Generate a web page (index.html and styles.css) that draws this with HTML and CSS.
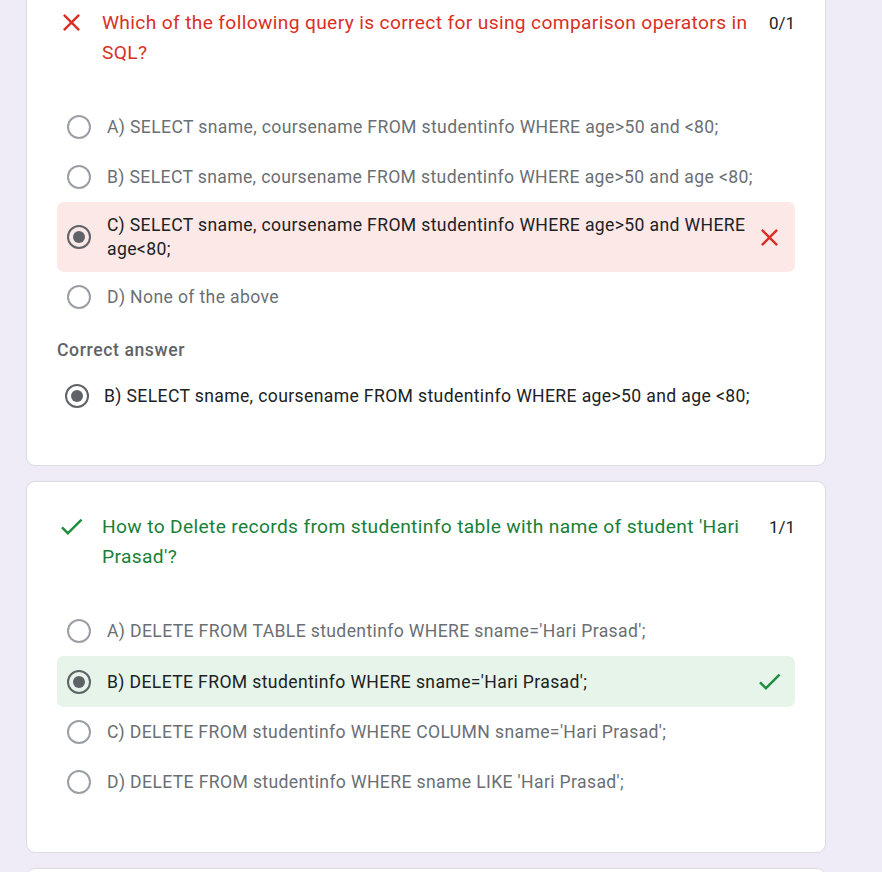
FILE: index.html
```html
<!DOCTYPE html>
<html lang="en">
<head>
<meta charset="utf-8">
<title>Quiz results</title>
<link rel="stylesheet" href="styles.css">
</head>
<body>
<main class="page">
  <section class="card card-first">
    <div class="q-head">
      <svg class="q-icon wrong" viewBox="0 0 24 24"><path d="M19 6.41L17.59 5 12 10.59 6.41 5 5 6.41 10.59 12 5 17.59 6.41 19 12 13.41 17.59 19 19 17.59 13.41 12z"/></svg>
      <div class="q-title wrong-text">Which of the following query is correct for using comparison operators in SQL?</div>
      <div class="q-score">0/1</div>
    </div>
    <div class="options">
      <div class="opt"><span class="radio"></span><span class="opt-text">A) SELECT sname, coursename FROM studentinfo WHERE age&gt;50 and &lt;80;</span></div>
      <div class="opt"><span class="radio"></span><span class="opt-text">B) SELECT sname, coursename FROM studentinfo WHERE age&gt;50 and age &lt;80;</span></div>
      <div class="opt opt-wrong"><span class="radio checked"></span><span class="opt-text">C) SELECT sname, coursename FROM studentinfo WHERE age&gt;50 and WHERE age&lt;80;</span>
        <svg class="opt-icon wrong" viewBox="0 0 24 24"><path d="M19 6.41L17.59 5 12 10.59 6.41 5 5 6.41 10.59 12 5 17.59 6.41 19 12 13.41 17.59 19 19 17.59 13.41 12z"/></svg>
      </div>
      <div class="opt"><span class="radio"></span><span class="opt-text">D) None of the above</span></div>
    </div>
    <div class="correct-label">Correct answer</div>
    <div class="opt opt-correct-answer"><span class="radio checked"></span><span class="opt-text">B) SELECT sname, coursename FROM studentinfo WHERE age&gt;50 and age &lt;80;</span></div>
  </section>

  <section class="card">
    <div class="q-head">
      <svg class="q-icon right" viewBox="0 0 24 24"><path d="M9 16.17L4.83 12l-1.42 1.41L9 19 21 7l-1.41-1.41z"/></svg>
      <div class="q-title right-text">How to Delete records from studentinfo table with name of student 'Hari Prasad'?</div>
      <div class="q-score">1/1</div>
    </div>
    <div class="options">
      <div class="opt"><span class="radio"></span><span class="opt-text">A) DELETE FROM TABLE studentinfo WHERE sname='Hari Prasad';</span></div>
      <div class="opt opt-right"><span class="radio checked"></span><span class="opt-text">B) DELETE FROM studentinfo WHERE sname='Hari Prasad';</span>
        <svg class="opt-icon right" viewBox="0 0 24 24"><path d="M9 16.17L4.83 12l-1.42 1.41L9 19 21 7l-1.41-1.41z"/></svg>
      </div>
      <div class="opt"><span class="radio"></span><span class="opt-text">C) DELETE FROM studentinfo WHERE COLUMN sname='Hari Prasad';</span></div>
      <div class="opt"><span class="radio"></span><span class="opt-text">D) DELETE FROM studentinfo WHERE sname LIKE 'Hari Prasad';</span></div>
    </div>
  </section>

  <section class="card card-next"></section>
</main>
</body>
</html>
```

FILE: styles.css
```css
html, body {
  margin: 0;
  padding: 0;
}
body {
  background: #efebf7;
  font-family: Roboto, "Liberation Sans", Arial, sans-serif;
  color: #202124;
  overflow: hidden;
  height: 872px;
}
.page {
  width: 800px;
  margin-left: 26px;
  margin-top: -23px;
  display: flex;
  flex-direction: column;
  gap: 15px;
}
.card {
  background: #fff;
  border: 1px solid #dadce0;
  border-radius: 9px;
  padding: 30px 30px 45px 30px;
}
.card-first {
  padding-bottom: 44px;
}
.card-next {
  min-height: 120px;
}
.q-head {
  display: flex;
  align-items: flex-start;
}
.q-icon {
  width: 29px;
  height: 29px;
  flex: none;
  margin-right: 16px;
}
.wrong { fill: #d93025; }
.right { fill: #1e8e3e; }
.q-title {
  flex: 1;
  font-size: 19.2px;
  line-height: 30px;
  letter-spacing: 0.35px;
}
.wrong-text { color: #d93025; }
.right-text { color: #188038; }
.q-score {
  flex: none;
  margin-left: 18px;
  font-size: 17px;
  line-height: 30px;
  color: #202124;
}
.options {
  margin-top: 34px;
  display: flex;
  flex-direction: column;
}
.opt {
  display: flex;
  align-items: center;
  min-height: 50px;
  box-sizing: border-box;
  padding: 11px 11px 11px 10px;
  border-radius: 7px;
}
.opt-text {
  flex: 1;
  font-size: 17.6px;
  line-height: 24px;
  letter-spacing: 0.36px;
  color: #6b6f74;
  margin-left: 16px;
}
.radio {
  flex: none;
  width: 24px;
  height: 24px;
  box-sizing: border-box;
  border: 2px solid #9aa0a6;
  border-radius: 50%;
  display: flex;
  align-items: center;
  justify-content: center;
}
.radio.checked {
  border: 2.5px solid #5f6368;
}
.radio.checked::after {
  content: "";
  width: 12px;
  height: 12px;
  border-radius: 50%;
  background: #5f6368;
}
.opt-wrong {
  background: #fce8e6;
}
.opt-right {
  background: #e6f4ea;
}
.opt-wrong .opt-text,
.opt-right .opt-text,
.opt-correct-answer .opt-text {
  color: #202124;
}
.opt-icon {
  width: 29px;
  height: 29px;
  flex: none;
  margin-left: 4px;
}
.correct-label {
  margin-top: 16px;
  font-size: 17.6px;
  line-height: 24px;
  font-weight: 500;
  color: #5f6368;
  letter-spacing: 0.6px;
}
.opt-correct-answer {
  margin-top: 9px;
  padding-left: 8px;
}
.opt-correct-answer .opt-text {
  margin-left: 15px;
}
```
